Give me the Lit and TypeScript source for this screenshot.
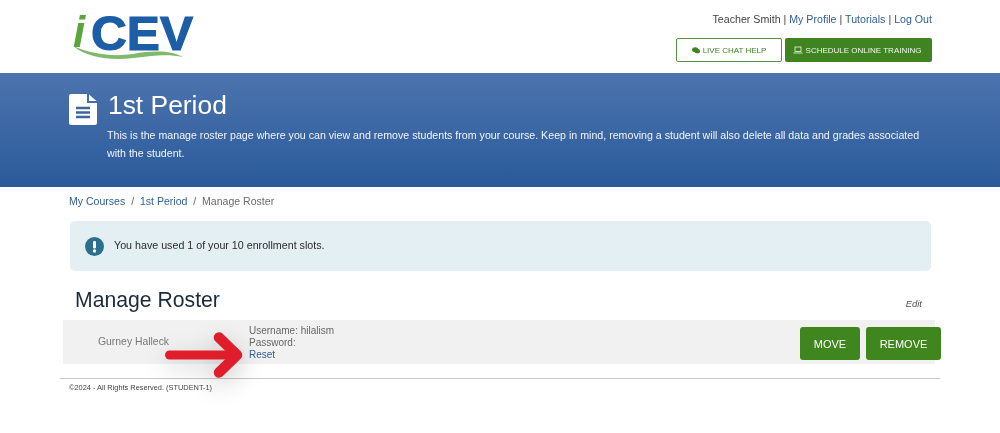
import { LitElement, html, css } from "lit";
import { customElement } from "lit/decorators.js";

@customElement("app-root")
export class AppRoot extends LitElement {
  static styles = css`
    :host { display: block; position: relative; height: 433px; overflow: hidden; background: #fff; font-family: "Liberation Sans", Arial, sans-serif; color: #333; filter: blur(0.3px); }
    a { color: #2f5f96; text-decoration: none; }
    .head { height: 73px; display: flex; justify-content: space-between; padding: 0 68px 0 71px; box-sizing: border-box; }
    .logo { display: block; margin-top: 13px; width: 124px; height: 48px; overflow: visible; }
    .logo-text { font: 700 48px "Liberation Sans", Arial, sans-serif; fill: #1b5ea6; stroke: #1b5ea6; stroke-width: 1.2px; }
    .logo-i { font: italic 700 44px "Liberation Sans", Arial, sans-serif; fill: #5aa63c; }
    .right { display: flex; flex-direction: column; align-items: flex-end; }
    .links { margin-top: 12px; font-size: 10.65px; line-height: 14px; color: #444; white-space: pre; }
    .btns { display: flex; gap: 3px; margin-top: 12px; }
    .hbtn { height: 24px; box-sizing: border-box; border-radius: 2px; font-size: 8px; display: flex; align-items: center; justify-content: center; gap: 3px; }
    .hbtn svg { display: block; }
    .chat { width: 106px; background: #fff; border: 1px solid #5a9145; color: #3f8420; }
    .sched { width: 147px; background: #3f8420; color: #f2f7ee; padding-right: 3px; }
    .banner { height: 114px; box-sizing: border-box; background: linear-gradient(#4c74ae, #2a5a9a); color: #fff; padding: 20px 60px 0 69px; display: flex; gap: 11px; }
    .doc { flex: none; margin-top: 1px; display: block; }
    .banner h1 { margin: 0; font-size: 26.4px; line-height: 24px; font-weight: 400; }
    .banner p { margin: 9px 0 0 -1px; font-size: 10.65px; line-height: 18px; width: 822px; color: #f2f5fa; }
    .crumbs { padding: 7px 0 0 69px; font-size: 10.55px; line-height: 14px; color: #6b6b6b; white-space: pre; }
    .alert { margin: 13px 69px 0 70px; height: 50px; background: #e3eff3; border-radius: 5px; display: flex; align-items: center; padding-left: 15px; gap: 10px; font-size: 10.7px; color: #2b2b2b; }
    .alert span { padding-bottom: 2px; }
    .alert svg { display: block; }
    .title { display: flex; justify-content: space-between; align-items: flex-end; margin: 17px 78px 0 75px; height: 32px; }
    .title h2 { margin: 0; font-size: 21.2px; font-weight: 400; line-height: 24px; color: #1a2b3c; padding-bottom: 8px; }
    .edit { font-size: 9.5px; font-style: italic; color: #555; line-height: 12px; padding-bottom: 10px; }
    .row { margin: 0 65px 0 63px; position: relative; height: 44px; background: #f1f1f1; display: flex; align-items: center; }
    .name { width: 186px; padding: 0 0 2px 35px; box-sizing: border-box; font-size: 10.4px; color: #777; filter: blur(0.5px); }
    .info { font-size: 10px; line-height: 12px; color: #666; padding-top: 1px; }
    .acts { position: absolute; left: 737px; top: 7px; display: flex; gap: 6px; }
    .act { height: 33px; border-radius: 3px; background: #3f861f; color: #fff; font-size: 11px; display: flex; align-items: center; justify-content: center; }
    .move { width: 60px; } .remove { width: 75px; }
    .foot { margin: 14px 60px 0 60px; border-top: 1px solid #c8c8c8; padding: 3px 0 0 9px; font-size: 7.4px; line-height: 12px; color: #444; }
    .arrow { position: absolute; left: 155px; top: 325px; filter: drop-shadow(0 8px 12px rgba(0,0,0,.22)); }
  `;

  render() {
    return html`
      <div class="head">
        <svg class="logo" viewBox="0 0 124 48" aria-label="iCEV">
          <text class="logo-i" x="2" y="34">i</text>
          <text class="logo-text" x="20" y="37" textLength="102" lengthAdjust="spacingAndGlyphs">CEV</text>
          <path d="M2 33 C20 41 42 44 62 41 C85 37 100 38 112 44 C98 41 85 42 62 45 C40 48 15 44 2 33Z" fill="#7fb96a"/>
        </svg>
        <div class="right">
          <div class="links">Teacher Smith | <a>My Profile</a> | <a>Tutorials</a> | <a>Log Out</a></div>
          <div class="btns">
            <div class="hbtn chat">
              <svg width="8" height="7" viewBox="0 0 8 7"><ellipse cx="3.2" cy="2.8" rx="3.2" ry="2.5" fill="#3f8420"/><ellipse cx="5.3" cy="4.2" rx="2.7" ry="2.1" fill="#3f8420"/></svg>
              LIVE CHAT HELP
            </div>
            <div class="hbtn sched">
              <svg width="10" height="8" viewBox="0 0 10 8" fill="none" stroke="#f2f7ee" stroke-width="0.8"><rect x="2" y="1" width="6" height="4.5"/><path d="M0.5 7h9"/></svg>
              SCHEDULE ONLINE TRAINING
            </div>
          </div>
        </div>
      </div>
      <div class="banner">
        <svg class="doc" width="28" height="31" viewBox="0 0 28 31"><path d="M2 0H18V9H28V29A2 2 0 0 1 26 31H2A2 2 0 0 1 0 29V2A2 2 0 0 1 2 0Z" fill="#fff"/><path d="M20 0.5L27.5 7H20Z" fill="#fff"/><path d="M7 14H21M7 18.5H21M7 23H21" stroke="#3c659f" stroke-width="2.4"/></svg>
        <div>
          <h1>1st Period</h1>
          <p>This is the manage roster page where you can view and remove students from your course. Keep in mind, removing a student will also delete all data and grades associated with the student.</p>
        </div>
      </div>
      <div class="crumbs"><a>My Courses</a>  /  <a>1st Period</a>  /  Manage Roster</div>
      <div class="alert">
        <svg width="19" height="19" viewBox="0 0 19 19"><circle cx="9.5" cy="9.5" r="9.5" fill="#2c6f8c"/><rect x="8" y="4" width="3" height="7.5" rx="1.2" fill="#fff"/><circle cx="9.5" cy="14" r="1.7" fill="#fff"/></svg>
        <span>You have used 1 of your 10 enrollment slots.</span>
      </div>
      <div class="title"><h2>Manage Roster</h2><span class="edit">Edit</span></div>
      <div class="row">
        <div class="name">Gurney Halleck</div>
        <div class="info">Username: hilalism<br />Password:<br /><a>Reset</a></div>
        <div class="acts"><div class="act move">MOVE</div><div class="act remove">REMOVE</div></div>
      </div>
      <div class="foot">©2024 - All Rights Reserved. (STUDENT-1)</div>
      <svg class="arrow" width="90" height="56" viewBox="0 0 90 56" fill="none" stroke="#e01e2b" stroke-linecap="round" stroke-linejoin="round"><path d="M14.5 30H80" stroke-width="9"/><path d="M64 12.5L82 30L64 47.5" stroke-width="10.5"/></svg>
    `;
  }
}
